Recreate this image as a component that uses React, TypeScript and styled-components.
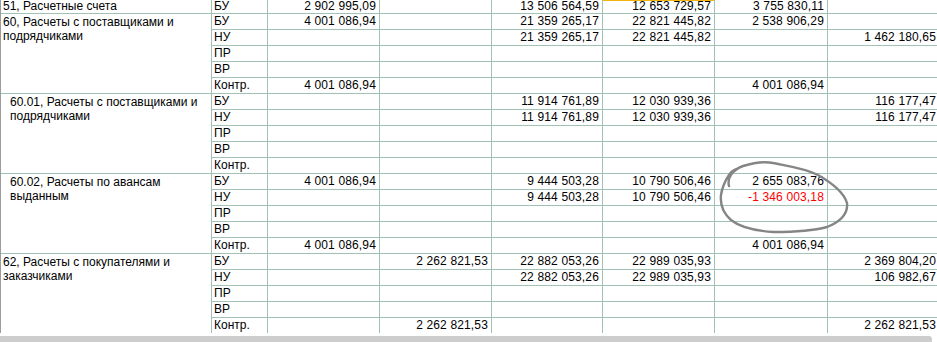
import React from 'react';
import styled, { createGlobalStyle } from 'styled-components';

const GRID = '#a3c2b6';

const GlobalStyle = createGlobalStyle`
  body {
    margin: 0;
    background: #ffffff;
    overflow: hidden;
    font-family: "Liberation Sans", Arial, sans-serif;
  }
`;

const Sheet = styled.div`
  position: relative;
  height: 333px;
  overflow: hidden;
  border-left: 1px solid #9c9c9c;
`;

// first row is cut by the window edge, so it is shorter
const Grid = styled.div`
  display: grid;
  grid-template-columns: 211px 56px 112px 112px 111px 112px 113px 112px;
  grid-template-rows: 14px;
  grid-auto-rows: 16px;
  font-size: 12px;
  color: #000;
`;

const AccountCell = styled.div<{ $span: number; $indent: boolean; $top?: boolean }>`
  grid-row: span ${(p) => p.$span};
  box-sizing: border-box;
  border-right: 1px solid ${GRID};
  border-bottom: 1px solid ${GRID};
  padding: ${(p) => (p.$top ? 0 : 1)}px 4px 0 ${(p) => (p.$indent ? 9 : 2)}px;
  line-height: ${(p) => (p.$top ? 13 : 14)}px;
`;

const KindCell = styled.div<{ $top?: boolean }>`
  box-sizing: border-box;
  border-right: 1px solid ${GRID};
  border-bottom: 1px solid ${GRID};
  padding-left: 2px;
  line-height: ${(p) => (p.$top ? 13 : 15)}px;
  white-space: nowrap;
`;

const NumCell = styled.div<{ $red?: boolean; $selected?: boolean; $top?: boolean }>`
  box-sizing: border-box;
  border-right: 1px solid ${GRID};
  border-bottom: 1px solid ${GRID};
  padding-right: 3px;
  line-height: ${(p) => (p.$top ? 13 : 15)}px;
  text-align: right;
  white-space: nowrap;
  letter-spacing: 0.15px;
  color: ${(p) => (p.$red ? '#ff0000' : 'inherit')};
  box-shadow: ${(p) => (p.$selected ? 'inset 0 1px 0 #f2b50f' : 'none')};
`;

const Mark = styled.svg`
  position: absolute;
  left: 0;
  top: 0;
  pointer-events: none;
`;

const Scrollbar = styled.div`
  margin-top: 3px;
  width: 932px;
  height: 6px;
  background: #cdcdcd;
  border-top-right-radius: 3px;
`;

interface Line {
  kind: string;
  values: string[];
  red?: number;
}

interface Group {
  title: string;
  indent?: boolean;
  lines: Line[];
}

const empty = ['', '', '', '', '', ''];

const groups: Group[] = [
  {
    title: '51, Расчетные счета',
    lines: [
      {
        kind: 'БУ',
        values: ['2 902 995,09', '', '13 506 564,59', '12 653 729,57', '3 755 830,11', ''],
      },
    ],
  },
  {
    title: '60, Расчеты с поставщиками и подрядчиками',
    lines: [
      {
        kind: 'БУ',
        values: ['4 001 086,94', '', '21 359 265,17', '22 821 445,82', '2 538 906,29', ''],
      },
      {
        kind: 'НУ',
        values: ['', '', '21 359 265,17', '22 821 445,82', '', '1 462 180,65'],
      },
      { kind: 'ПР', values: empty },
      { kind: 'ВР', values: empty },
      { kind: 'Контр.', values: ['4 001 086,94', '', '', '', '4 001 086,94', ''] },
    ],
  },
  {
    title: '60.01, Расчеты с поставщиками и подрядчиками',
    indent: true,
    lines: [
      {
        kind: 'БУ',
        values: ['', '', '11 914 761,89', '12 030 939,36', '', '116 177,47'],
      },
      {
        kind: 'НУ',
        values: ['', '', '11 914 761,89', '12 030 939,36', '', '116 177,47'],
      },
      { kind: 'ПР', values: empty },
      { kind: 'ВР', values: empty },
      { kind: 'Контр.', values: empty },
    ],
  },
  {
    title: '60.02, Расчеты по авансам выданным',
    indent: true,
    lines: [
      {
        kind: 'БУ',
        values: ['4 001 086,94', '', '9 444 503,28', '10 790 506,46', '2 655 083,76', ''],
      },
      {
        kind: 'НУ',
        values: ['', '', '9 444 503,28', '10 790 506,46', '-1 346 003,18', ''],
        red: 4,
      },
      { kind: 'ПР', values: empty },
      { kind: 'ВР', values: empty },
      { kind: 'Контр.', values: ['4 001 086,94', '', '', '', '4 001 086,94', ''] },
    ],
  },
  {
    title: '62, Расчеты с покупателями и заказчиками',
    lines: [
      {
        kind: 'БУ',
        values: ['', '2 262 821,53', '22 882 053,26', '22 989 035,93', '', '2 369 804,20'],
      },
      {
        kind: 'НУ',
        values: ['', '', '22 882 053,26', '22 989 035,93', '', '106 982,67'],
      },
      { kind: 'ПР', values: empty },
      { kind: 'ВР', values: empty },
      { kind: 'Контр.', values: ['', '2 262 821,53', '', '', '', '2 262 821,53'] },
    ],
  },
];

// hand-drawn pencil loop around the 60.02 difference
const loop =
  'M728 186 C726 178 731 170 742 166 C752 163 762 161 772 163 C786 166 803 168 817 175 ' +
  'C831 183 843 193 846 203 C847 212 841 221 826 227 C811 231 792 232 773 232 ' +
  'C757 231 740 228 730 220 C722 213 719 204 720 195 C721 188 724 181 728 175 C730 172 733 170 736 169';

export default function App() {
  return (
    <>
      <GlobalStyle />
      <Sheet>
        <Grid>
          {groups.map((g, gi) => (
            <React.Fragment key={g.title}>
              {g.lines.map((line, li) => {
                const top = gi === 0;
                return (
                  <React.Fragment key={line.kind}>
                    {li === 0 && (
                      <AccountCell $span={g.lines.length} $indent={!!g.indent} $top={top}>
                        {g.title}
                      </AccountCell>
                    )}
                    <KindCell $top={top}>{line.kind}</KindCell>
                    {line.values.map((v, vi) => (
                      <NumCell
                        key={vi}
                        $top={top}
                        $red={line.red === vi}
                        $selected={top && vi === 3}
                      >
                        {v}
                      </NumCell>
                    ))}
                  </React.Fragment>
                );
              })}
            </React.Fragment>
          ))}
        </Grid>
        <Mark width="937" height="333" viewBox="0 0 937 333">
          <path
            d={loop}
            fill="none"
            stroke="#858585"
            strokeWidth="2.4"
            strokeLinecap="round"
            strokeLinejoin="round"
          />
        </Mark>
      </Sheet>
      <Scrollbar />
    </>
  );
}
